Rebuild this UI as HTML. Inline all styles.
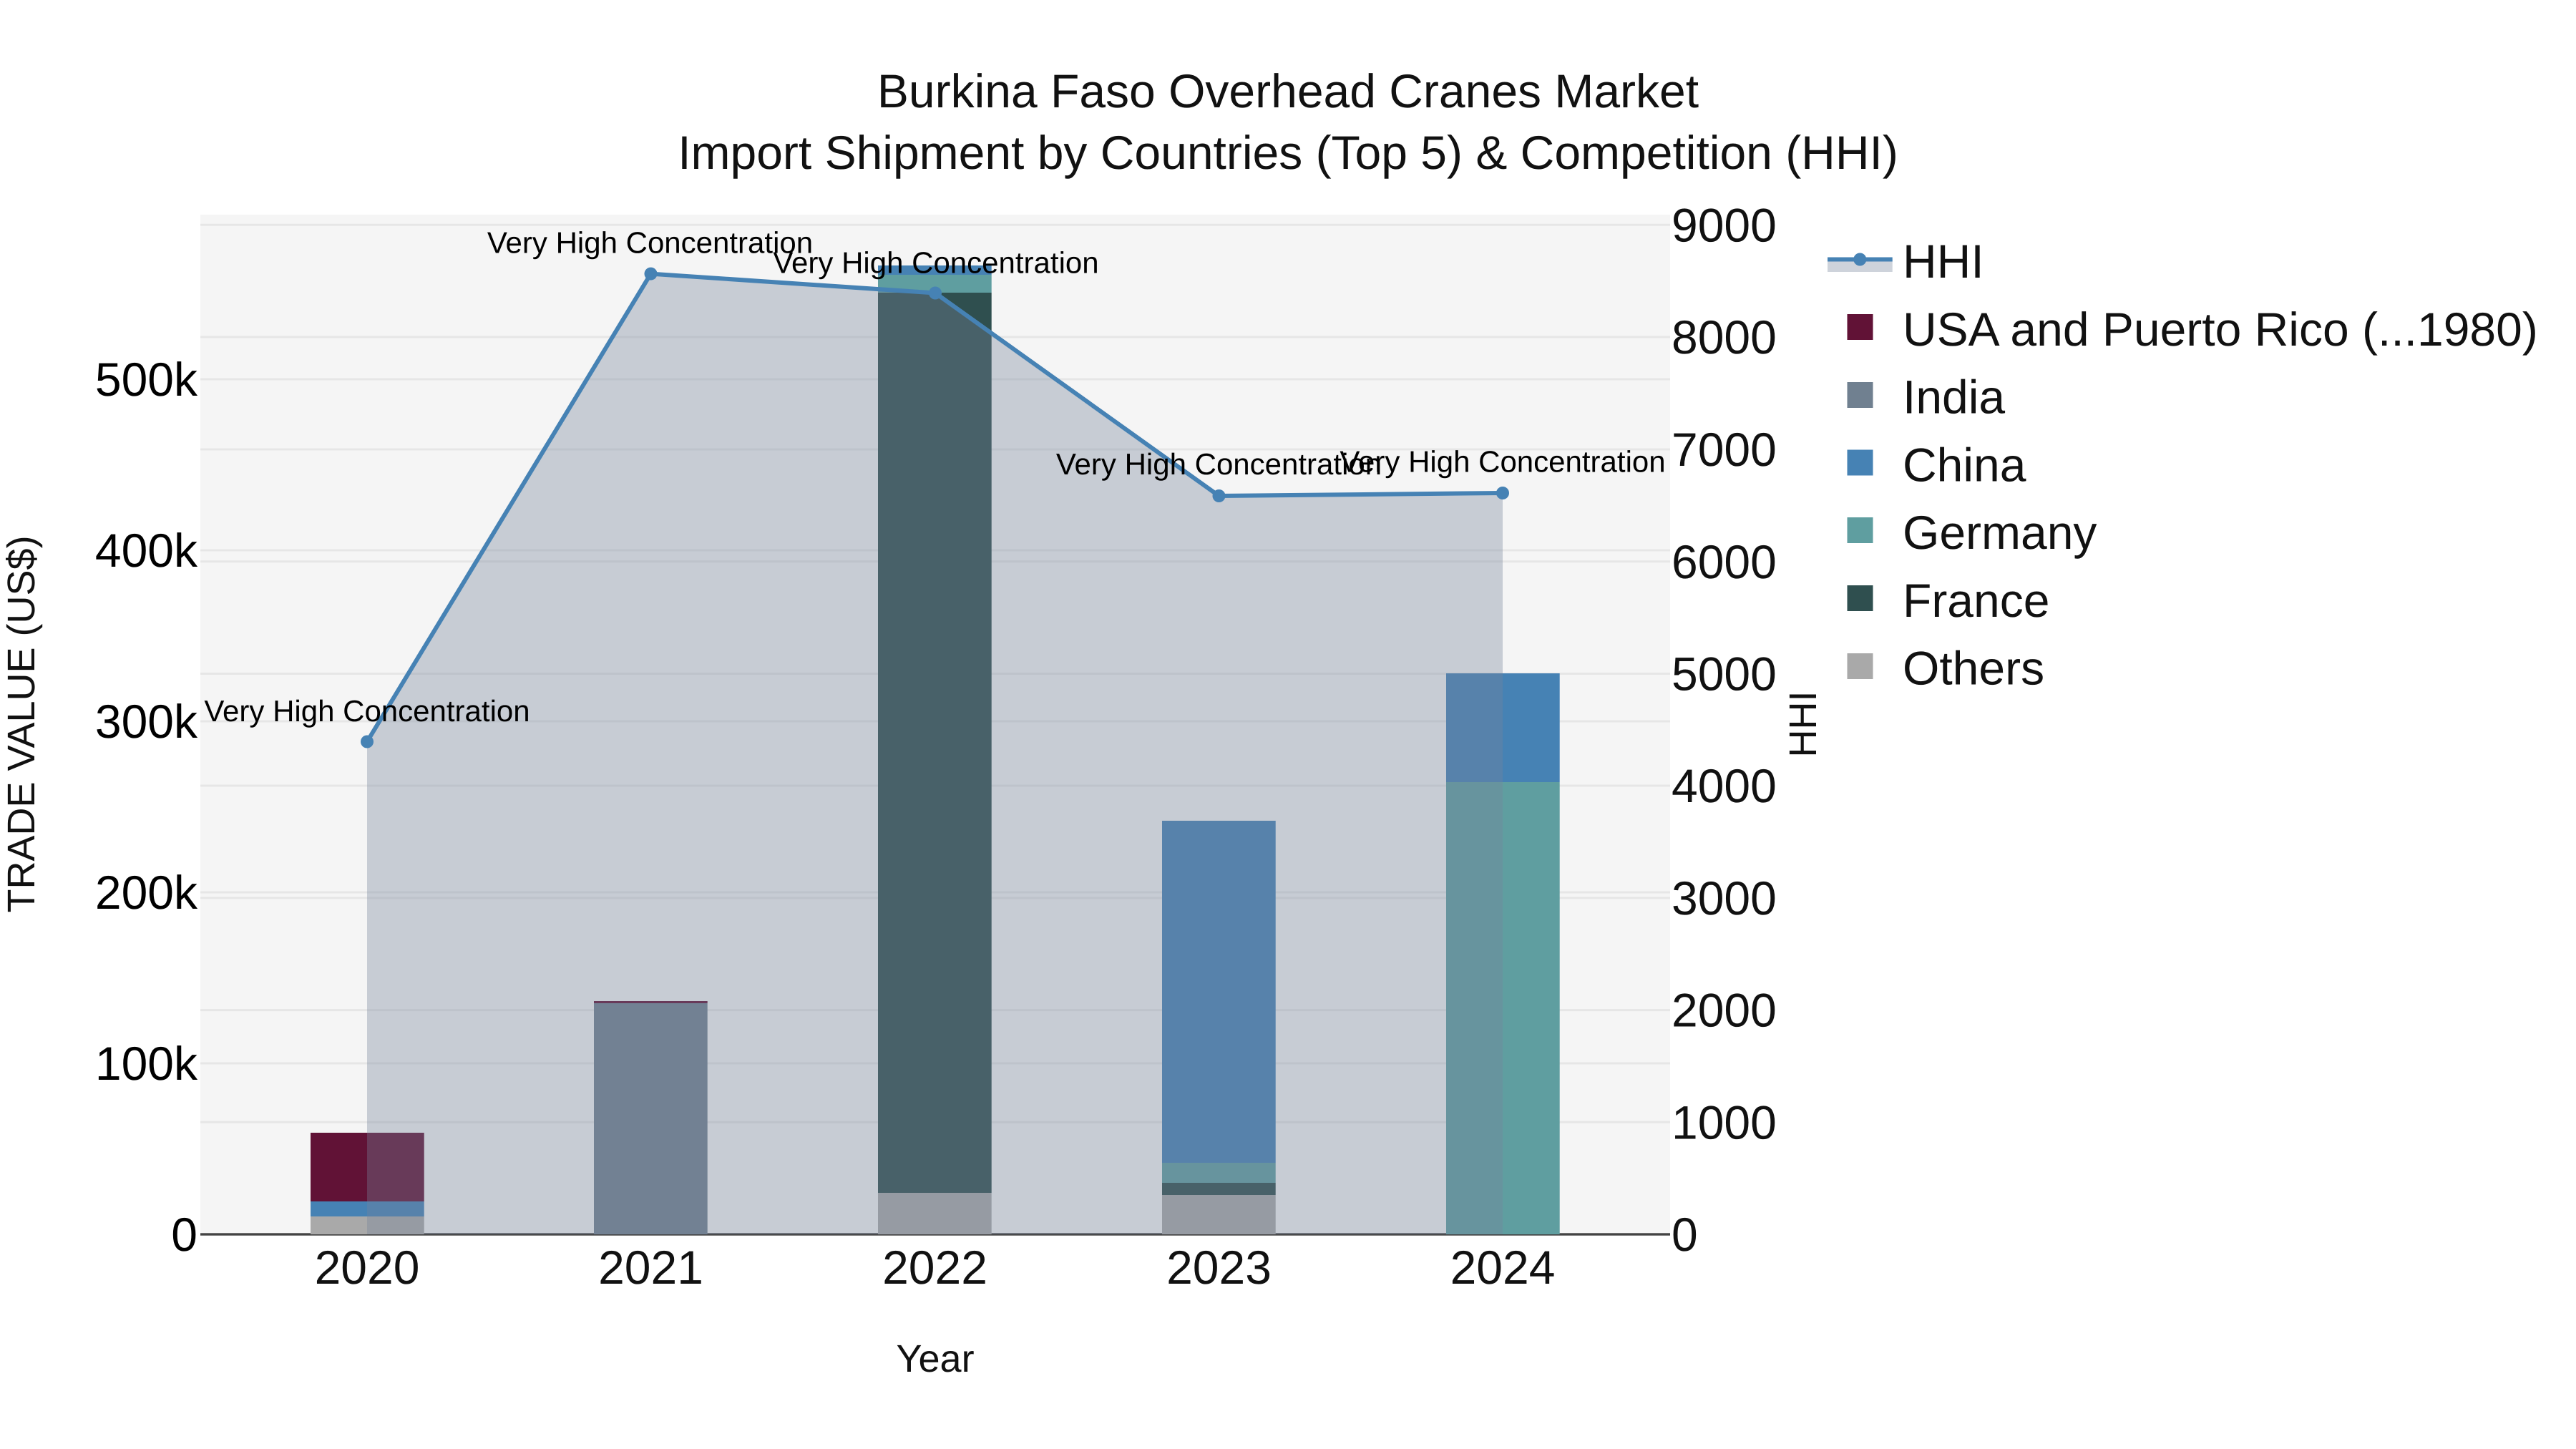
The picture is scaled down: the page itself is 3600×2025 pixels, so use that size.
<!DOCTYPE html>
<html>
<head>
<meta charset="utf-8">
<title>Burkina Faso Overhead Cranes Market</title>
<style>
html,body{margin:0;padding:0;background:#fff;width:3600px;height:2025px;overflow:hidden}
svg{display:block}
text{font-family:"Liberation Sans",sans-serif;text-rendering:geometricPrecision}
.t{font-size:66px;fill:#111}
.l{font-size:66px;fill:#000;text-anchor:end}
.r{font-size:66px;fill:#111}
.x{font-size:66px;fill:#111;text-anchor:middle}
.a{font-size:42px;fill:#000;text-anchor:middle}
.at{font-size:54px;fill:#111;text-anchor:middle}
</style>
</head>
<body>
<svg width="3600" height="2025" viewBox="0 0 3600 2025" xmlns="http://www.w3.org/2000/svg">
<rect width="3600" height="2025" fill="#fff"/>
<rect x="280" y="300" width="2054" height="1425" fill="#f5f5f5"/>
<g stroke="#e6e6e6" stroke-width="3">
<path d="M280 1486H2334M280 1247H2334M280 1008H2334M280 769H2334M280 530H2334"/>
<path d="M280 1568.3H2334M280 1411.6H2334M280 1254.9H2334M280 1098H2334M280 941.5H2334M280 784.8H2334M280 628H2334M280 471H2334M280 314.3H2334"/>
</g>
<rect x="280" y="1723.3" width="2054" height="3.4" fill="#444"/>
<!-- 2020 -->
<rect x="434" y="1700" width="158.7" height="25" fill="#a9a9a9"/>
<rect x="434" y="1679" width="158.7" height="21" fill="#4682b4"/>
<rect x="434" y="1583" width="158.7" height="96" fill="#611236"/>
<!-- 2021 -->
<rect x="830" y="1402" width="158.7" height="323" fill="#708090"/>
<rect x="830" y="1399" width="158.7" height="3" fill="#611236"/>
<!-- 2022 -->
<rect x="1227" y="1667" width="158.7" height="58" fill="#a9a9a9"/>
<rect x="1227" y="409" width="158.7" height="1258" fill="#2f4f4f"/>
<rect x="1227" y="384" width="158.7" height="25" fill="#5f9ea0"/>
<rect x="1227" y="371" width="158.7" height="13" fill="#4682b4"/>
<!-- 2023 -->
<rect x="1624" y="1670" width="158.7" height="55" fill="#a9a9a9"/>
<rect x="1624" y="1653" width="158.7" height="17" fill="#2f4f4f"/>
<rect x="1624" y="1625" width="158.7" height="28" fill="#5f9ea0"/>
<rect x="1624" y="1147" width="158.7" height="478" fill="#4682b4"/>
<!-- 2024 -->
<rect x="2021" y="1093" width="158.7" height="632" fill="#5f9ea0"/>
<rect x="2021" y="941" width="158.7" height="152" fill="#4682b4"/>
<!-- HHI area -->
<path d="M513 1036.5L909.5 382.6L1307 409.5L1703.5 693L2100 689V1725H513Z" fill="rgb(118,132,154)" fill-opacity=".355"/>
<path d="M513 1036.5L909.5 382.6L1307 409.5L1703.5 693L2100 689" fill="none" stroke="#4682b4" stroke-width="6" stroke-linejoin="round"/>
<g fill="#4682b4">
<circle cx="513" cy="1036.5" r="9"/><circle cx="909.5" cy="382.6" r="9"/><circle cx="1307" cy="409.5" r="9"/><circle cx="1703.5" cy="693" r="9"/><circle cx="2100" cy="689" r="9"/>
</g>
<!-- annotations -->
<text class="a" x="513" y="1008">Very High Concentration</text>
<text class="a" x="908.5" y="353.5">Very High Concentration</text>
<text class="a" x="1308" y="381.5">Very High Concentration</text>
<text class="a" x="1703.5" y="663">Very High Concentration</text>
<text class="a" x="2100" y="659.5">Very High Concentration</text>
<!-- title -->
<text class="t" x="1800" y="150" text-anchor="middle">Burkina Faso Overhead Cranes Market</text>
<text class="t" x="1800" y="236" text-anchor="middle">Import Shipment by Countries (Top 5) &amp; Competition (HHI)</text>
<!-- left ticks -->
<text class="l" x="276" y="1748">0</text>
<text class="l" x="276" y="1509">100k</text>
<text class="l" x="276" y="1270">200k</text>
<text class="l" x="276" y="1031">300k</text>
<text class="l" x="276" y="792">400k</text>
<text class="l" x="276" y="553">500k</text>
<!-- right ticks -->
<text class="r" x="2336" y="1748">0</text>
<text class="r" x="2336" y="1591.5">1000</text>
<text class="r" x="2336" y="1434.7">2000</text>
<text class="r" x="2336" y="1278">3000</text>
<text class="r" x="2336" y="1121">4000</text>
<text class="r" x="2336" y="964.5">5000</text>
<text class="r" x="2336" y="807.8">6000</text>
<text class="r" x="2336" y="651">7000</text>
<text class="r" x="2336" y="494">8000</text>
<text class="r" x="2336" y="337.5">9000</text>
<!-- x ticks -->
<text class="x" x="513" y="1794">2020</text>
<text class="x" x="909.5" y="1794">2021</text>
<text class="x" x="1306.5" y="1794">2022</text>
<text class="x" x="1703.5" y="1794">2023</text>
<text class="x" x="2100" y="1794">2024</text>
<!-- axis titles -->
<text class="at" x="1307" y="1917">Year</text>
<text class="at" transform="translate(48 1012) rotate(-90)">TRADE VALUE (US$)</text>
<text class="at" transform="translate(2538 1012) rotate(-90)">HHI</text>
<!-- legend -->
<rect x="2554" y="362.5" width="90.7" height="17.5" fill="rgb(118,132,154)" fill-opacity=".355"/>
<rect x="2554" y="359.5" width="90.7" height="6" fill="#4682b4"/>
<circle cx="2599.3" cy="362.5" r="9" fill="#4682b4"/>
<rect x="2581.5" y="439" width="36" height="36" fill="#611236"/>
<rect x="2581.5" y="534" width="36" height="36" fill="#708090"/>
<rect x="2581.5" y="628.5" width="36" height="36" fill="#4682b4"/>
<rect x="2581.5" y="723" width="36" height="36" fill="#5f9ea0"/>
<rect x="2581.5" y="818" width="36" height="36" fill="#2f4f4f"/>
<rect x="2581.5" y="913" width="36" height="36" fill="#a9a9a9"/>
<text class="r" x="2659" y="388">HHI</text>
<text class="r" x="2659" y="483">USA and Puerto Rico (...1980)</text>
<text class="r" x="2659" y="577.5">India</text>
<text class="r" x="2659" y="672.5">China</text>
<text class="r" x="2659" y="767">Germany</text>
<text class="r" x="2659" y="862">France</text>
<text class="r" x="2659" y="956.5">Others</text>
</svg>
</body>
</html>
